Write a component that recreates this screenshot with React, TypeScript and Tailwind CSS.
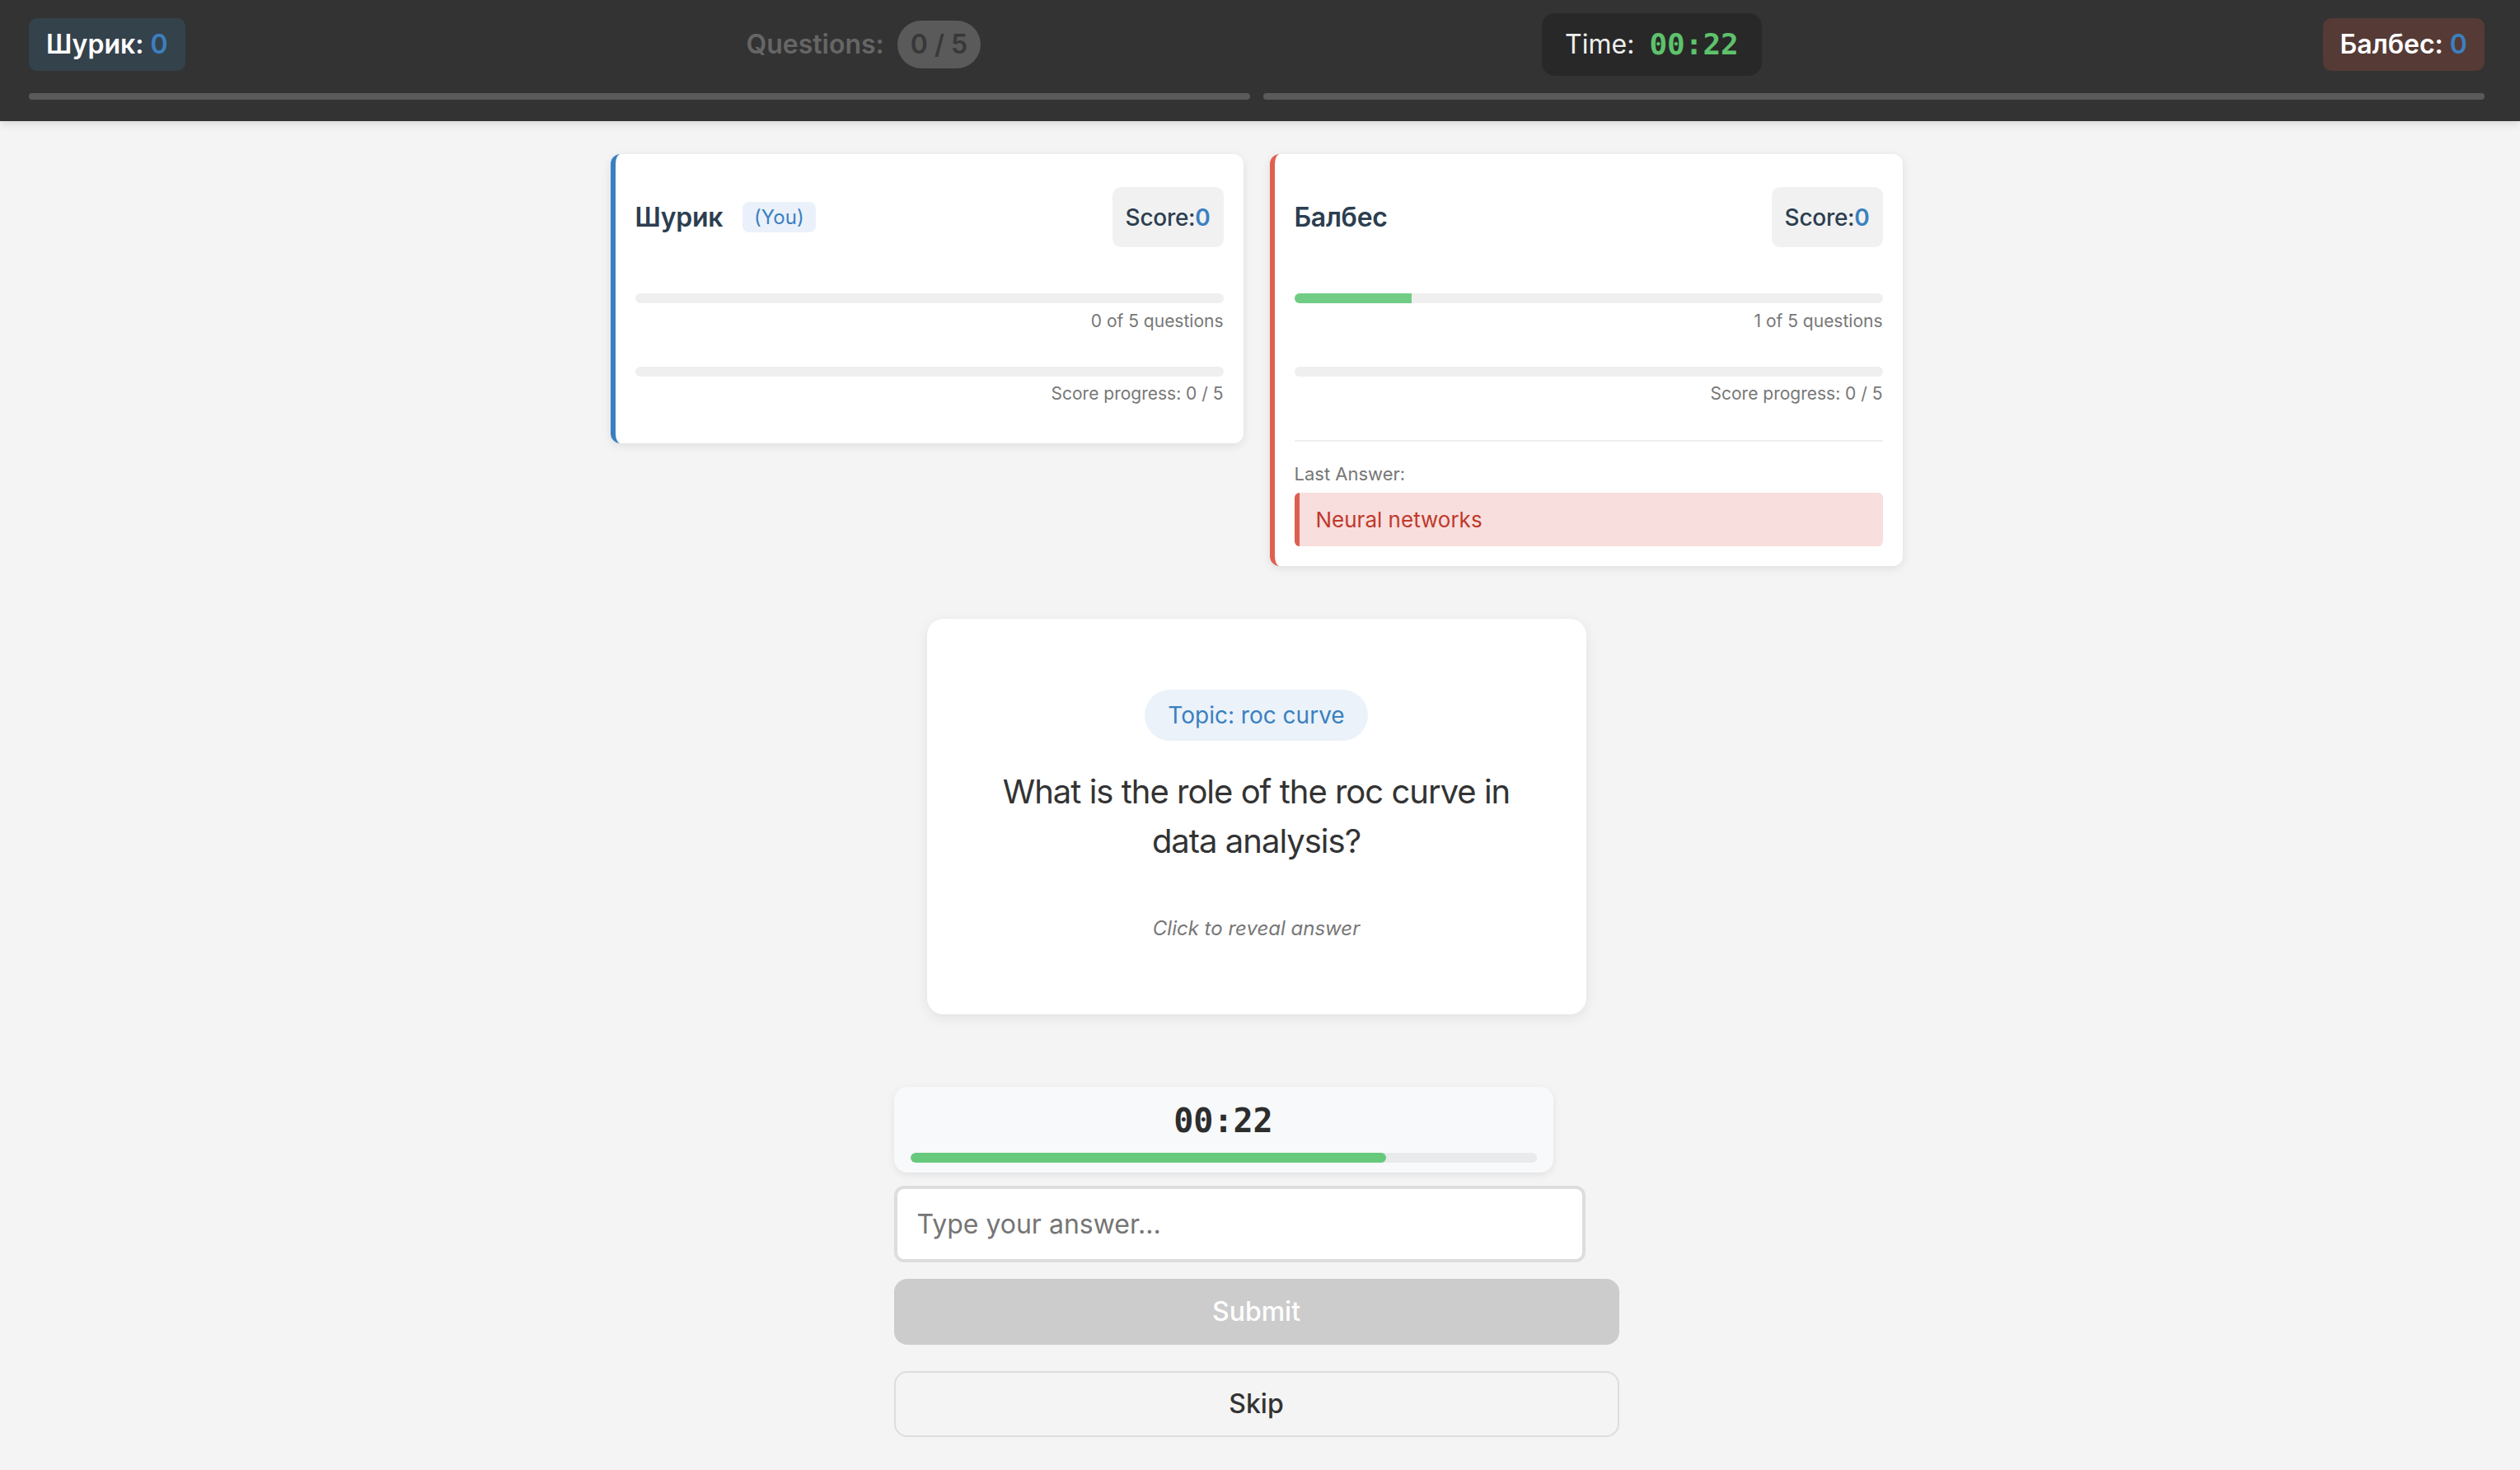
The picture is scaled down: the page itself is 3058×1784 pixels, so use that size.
import React from "react";

function PlayerCard({
  name,
  you,
  accent,
  answered,
  lastAnswer,
}: {
  name: string;
  you?: boolean;
  accent: "blue" | "red";
  answered: number;
  lastAnswer?: string;
}) {
  const border = accent === "blue" ? "border-[#3a80c0]" : "border-[#e0604f]";
  return (
    <div
      className={`w-[768px] bg-white rounded-[12px] border-l-[6px] ${border} shadow-[0_3px_12px_rgba(0,0,0,0.09)] px-6 pt-10 ${
        lastAnswer ? "pb-6" : "pb-[45px]"
      }`}
    >
      <div className="flex items-center justify-between h-[73px]">
        <div className="flex items-center gap-6">
          <span className="text-[32px] font-semibold text-[#2c3e50] leading-none tracking-[-0.01em]">{name}</span>
          {you && (
            <span className="text-[24px] leading-[29px] text-[#3a80c0] bg-[#ebf1fa] rounded-lg px-[14px] py-1">
              (You)
            </span>
          )}
        </div>
        <div className="bg-[#f1f1f1] rounded-[10px] px-4 h-[73px] flex items-center text-[28px] text-[#2c3e50] font-medium tracking-[-0.01em]">
          Score:<span className="text-[#3a80c0] font-semibold">0</span>
        </div>
      </div>
      <div className="mt-[56px] h-3 rounded-full bg-[#efefef] overflow-hidden">
        <div className="h-full bg-[#71cc85]" style={{ width: `${(answered / 5) * 100}%` }} />
      </div>
      <div className="mt-[6px] text-right text-[21px] leading-[31px] text-[#777]">
        {answered} of 5 questions
      </div>
      <div className="mt-[40px] h-3 rounded-full bg-[#efefef]" />
      <div className="mt-[5px] text-right text-[21px] leading-[31px] text-[#777]">Score progress: 0 / 5</div>
      {lastAnswer && (
        <div className="mt-[41px] border-t-2 border-[#eeeeee] pt-[23px]">
          <div className="text-[22px] leading-[33px] text-[#777]">Last Answer:</div>
          <div className="mt-[6px] h-[65px] flex items-center bg-[#f8dedd] border-l-[6px] border-[#dc5f4f] rounded-md pl-5 text-[26px] text-[#c0392b]">
            {lastAnswer}
          </div>
        </div>
      )}
    </div>
  );
}

export default function App() {
  return (
    <div className="min-h-screen bg-[#f4f4f4] font-['Inter','Noto_Sans',sans-serif]">
      <header className="bg-[#333333] pl-[35px] pr-[43px] pt-4 pb-[26px] shadow-[0_3px_10px_rgba(0,0,0,0.12)]">
        <div className="flex items-center justify-between h-[76px]">
          <div className="bg-[#34424c] rounded-[10px] px-[21px] py-2 text-[32px] leading-[48px] font-semibold text-white">
            Шурик: <span className="text-[#3b80c0]">0</span>
          </div>
          <div className="flex items-center gap-4 text-[32px] font-semibold text-[#666666]">
            <span>Questions:</span>
            <span className="bg-[#5a5a5a] rounded-full px-4 py-[5px] leading-[48px] text-[#383838]">0 / 5</span>
          </div>
          <div className="bg-[#282828] rounded-2xl px-7 h-[76px] flex items-center gap-[18px]">
            <span className="text-[32px] text-[#eeeeee]">Time:</span>
            <span className="font-['DejaVu_Sans_Mono',monospace] text-[36px] font-bold text-[#5ec26c]">00:22</span>
          </div>
          <div className="bg-[#553a36] rounded-[10px] px-[21px] py-2 text-[32px] leading-[48px] font-semibold text-white">
            Балбес: <span className="text-[#3b80c0]">0</span>
          </div>
        </div>
        <div className="mt-[21px] flex gap-4">
          <div className="flex-1 h-2 rounded bg-[#5a5a5a]" />
          <div className="flex-1 h-2 rounded bg-[#5a5a5a]" />
        </div>
      </header>

      <main className="flex flex-col items-center pt-10 pr-[9px] pb-10">
        <div className="flex items-start gap-8">
          <PlayerCard name="Шурик" you accent="blue" answered={0} />
          <PlayerCard name="Балбес" accent="red" answered={1} lastAnswer="Neural networks" />
        </div>

        <div className="mt-16 w-[800px] h-[480px] bg-white rounded-[20px] shadow-[0_4px_16px_rgba(0,0,0,0.08)] flex flex-col items-center justify-center px-16 text-center">
          <div className="bg-[#ebf2f9] text-[#3a80c0] rounded-full px-7 py-[10px] text-[28px] leading-[42px]">
            Topic: roc curve
          </div>
          <div className="mt-8 text-[40px] leading-[60px] tracking-[-0.025em] text-[#333333]">
            What is the role of the roc curve in data analysis?
          </div>
          <div className="mt-[58px] text-[24px] leading-[36px] italic text-[#777777]">Click to reveal answer</div>
        </div>

        <div className="mt-[88px] w-[880px] flex flex-col items-start">
          <div className="w-[800px] bg-[#f8f9fa] rounded-2xl shadow-[0_3px_10px_rgba(0,0,0,0.08)] px-5 pt-[17px] pb-3">
            <div className="text-center font-['DejaVu_Sans_Mono',monospace] font-bold text-[40px] leading-[48px] text-[#2d2d2d]">
              00:22
            </div>
            <div className="mt-[15px] h-3 rounded-full bg-[#e9eaec] overflow-hidden">
              <div className="h-full rounded-full bg-[#66c97c]" style={{ width: "76%" }} />
            </div>
          </div>
          <input
            placeholder="Type your answer..."
            className="mt-4 w-[839px] h-[93px] border-4 border-[#dddddd] rounded-xl bg-white px-6 text-[32px] text-[#333] placeholder:text-[#757575] outline-none"
          />
          <button className="mt-5 w-full h-20 bg-[#cccccc] rounded-2xl text-white text-[32px] font-medium">
            Submit
          </button>
          <button className="mt-8 w-full h-20 border-2 border-[#dddddd] rounded-2xl bg-transparent text-[#333333] text-[32px] font-medium">
            Skip
          </button>
        </div>
      </main>
    </div>
  );
}
